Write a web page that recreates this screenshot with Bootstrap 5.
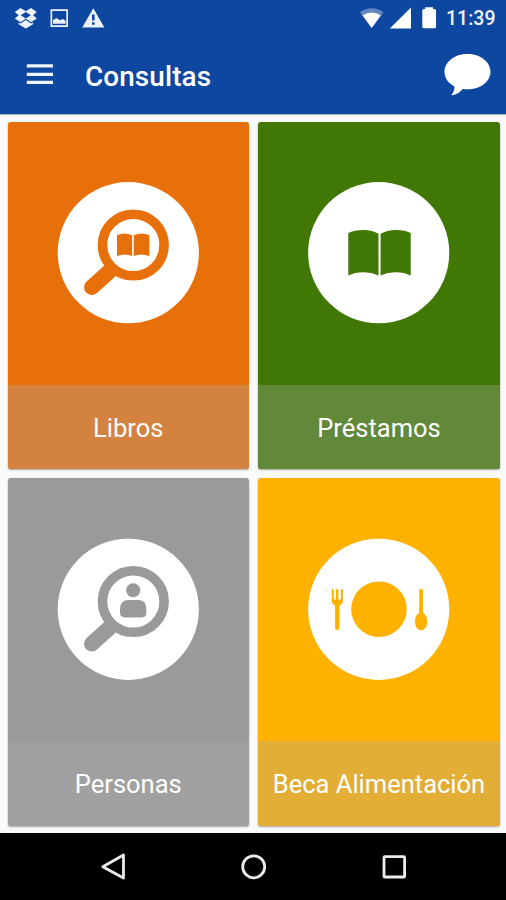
<!DOCTYPE html>
<html lang="es">
<head>
<meta charset="utf-8">
<meta name="viewport" content="width=device-width, initial-scale=1">
<title>Consultas</title>
<link href="https://cdn.jsdelivr.net/npm/bootstrap@5.3.0/dist/css/bootstrap.min.css" rel="stylesheet">
<style>
  body { font-family: Roboto, "Liberation Sans", sans-serif; background: #fafafa; height: 900px; overflow: hidden; }
  svg { display: block; flex: none; }
  .app-head { background: #0e479f; height: 114px; color: #fff; box-shadow: 0 1px 1px rgba(0,0,0,.3); }
  .status-row { height: 38px; padding: 0 11px 0 14px; }
  .clock { font-size: 19.5px; font-weight: 500; line-height: 38px; width: 49px; margin-left: 9px; white-space: nowrap; color: #eef3fb; }
  .tool-row { height: 76px; padding: 0 14px 0 26px; }
  .title { font-size: 27.9px; font-weight: 500; line-height: 76px; margin-left: 31px; padding-top: 2px; letter-spacing: .1px; }
  .tiles { display: grid; grid-template-columns: 242px 242px; grid-template-rows: 347px 348px; gap: 9px; padding: 8px 6px 7px 7px; height: 719px; }
  .tile { background: var(--tone); color: #fff; border-radius: 3px; overflow: hidden; box-shadow: 0 1px 2px rgba(0,0,0,.35); text-decoration: none; }
  .tile:nth-child(odd) { margin-left: .5px; }
  .tile-art { height: 263px; padding-top: 60px; fill: var(--tone); stroke: none; }
  .tile-label { background: var(--band); font-size: 25.5px; line-height: 87px; white-space: nowrap; }
  .orange { --tone: #e7700b; --band: #d3823f; }
  .green { --tone: #417704; --band: #628839; }
  .gray { --tone: #9a9a9a; --band: #a0a0a0; }
  .amber { --tone: #ffb100; --band: #e2ae35; }
  .sys-nav { background: #000; height: 67px; }
</style>
</head>
<body class="d-flex flex-column">
<header class="app-head position-relative">
  <div class="status-row d-flex align-items-center">
    <svg width="92" height="38" viewBox="14 0 92 38" fill="#eef3fb">
      <path fill-rule="evenodd" d="M20.5 8 25.8 11.3 31.1 8 36.8 11.9 33 15.2 36.8 18.6 31.1 22.2 25.8 18.8 20.5 22.2 14.8 18.6 18.6 15.2 14.8 11.9zM25.8 11.9 20.7 15.2 25.8 18.4 30.9 15.2zM18.6 22.4 20.6 23.5 25.8 20 31 23.5 33 22.4V24.3L25.8 28.6 18.6 24.3z"/>
      <path fill-rule="evenodd" d="M50.5 9.2H68V26.9H50.5zM52.2 10.9V25.2H66.3V10.9zM53 23.7V20.3L56.5 18 60 20.3 63 19 65.6 21V23.7z"/>
      <path fill-rule="evenodd" d="M93.3 8.2 104.4 27.4H82.2zM92 14.5V20.4H94.6V14.5zM92 22.3V24.8H94.6V22.3z"/>
    </svg>
    <svg class="ms-auto" width="78" height="38" viewBox="359 0 78 38" fill="#fff">
      <path opacity=".35" d="M359.8 12.2Q371.7 4.5 383.5 12.2L371.7 28z"/>
      <path d="M362.5 15.2Q371.7 10 380.9 15.2L371.7 28z"/>
      <path d="M411 7.5V28.4H389.8z"/>
      <path d="M425.2 7.3H433V9H434.5Q436 9 436 10.5V26.8Q436 28.3 434.5 28.3H423.8Q422.3 28.3 422.3 26.8V10.5Q422.3 9 423.8 9H425.2z"/>
    </svg>
    <span class="clock">11:39</span>
  </div>
  <div class="tool-row d-flex align-items-center">
    <svg width="28" height="76" viewBox="26 38 28 76" fill="#eef3fb"><path d="M26.8 64.3H53V67.6H26.8zM26.8 72.8H53V76.1H26.8zM26.8 80.8H53V84.1H26.8z"/></svg>
    <span class="title">Consultas</span>
    <svg class="ms-auto" width="48" height="76" viewBox="444 38 48 76" fill="#fff"><path d="M467.5 54C480.3 54 490.5 61.8 490.5 71.7S480.3 89.3 467.5 89.3Q465 89.3 462.6 88.9C460 92.3 456.5 94.7 452.2 95.2C451.6 95.2 451.5 94.7 452 94.2C453.9 91.8 454.7 89.5 454.2 86.3C448.2 83.2 444.5 77.8 444.5 71.7C444.5 61.8 454.7 54 467.5 54z"/></svg>
  </div>
</header>

<main class="tiles">
  <a class="tile orange" href="#">
    <div class="tile-art d-flex justify-content-center align-items-start">
      <svg width="142" height="142" viewBox="7.2 7 142 142">
        <circle cx="78.5" cy="77.7" r="70.6" fill="#fff"/>
        <circle cx="83.5" cy="70" r="30.8" fill="none" stroke="var(--tone)" stroke-width="9.6"/>
        <path d="M60 96 42 112.3" fill="none" stroke="var(--tone)" stroke-width="15.5" stroke-linecap="round"/>
        <path d="M67.2 60.3Q74.5 56.8 82.3 60.2V81Q74.5 77.8 67.2 81.2zM83.9 60.2Q92 56.8 99.6 60.3V81.2Q92 77.8 83.9 81z"/>
      </svg>
    </div>
    <div class="tile-label text-center">Libros</div>
  </a>
  <a class="tile green" href="#">
    <div class="tile-art d-flex justify-content-center align-items-start">
      <svg width="142" height="142" viewBox="8 7 142 142">
        <circle cx="78.7" cy="77.7" r="70.6" fill="#fff"/>
        <path d="M48.3 58Q54 55 63.5 55Q72.5 55.2 78.5 58.8V100.5Q71 97 63.5 97.2Q54.5 97.3 48.3 100.5zM80.6 58.8Q87 55.2 96 55Q105 55 110.7 58V100.5Q104.5 97.3 96 97.2Q88 97 80.6 100.5z"/>
      </svg>
    </div>
    <div class="tile-label text-center">Préstamos</div>
  </a>
  <a class="tile gray" href="#">
    <div class="tile-art d-flex justify-content-center align-items-start">
      <svg width="142" height="142" viewBox="7.2 8 142 142">
        <circle cx="78.5" cy="79.3" r="70.6" fill="#fff"/>
        <circle cx="83.5" cy="71.5" r="30.8" fill="none" stroke="var(--tone)" stroke-width="9.6"/>
        <path d="M60 97.5 42 113.8" fill="none" stroke="var(--tone)" stroke-width="15.5" stroke-linecap="round"/>
        <circle cx="83.4" cy="60.3" r="7"/>
        <path d="M78 70H89Q96.6 70.5 96.6 79V82.5Q96.6 87.3 91.5 87.5H75.5Q70.2 87.3 70.2 82.5V79Q70.2 70.5 78 70z"/>
      </svg>
    </div>
    <div class="tile-label text-center">Personas</div>
  </a>
  <a class="tile amber" href="#">
    <div class="tile-art d-flex justify-content-center align-items-start">
      <svg width="142" height="142" viewBox="8 8 142 142">
        <circle cx="78.7" cy="79.3" r="70.6" fill="#fff"/>
        <circle cx="79" cy="79.2" r="27.8"/>
        <path d="M31.7 60Q31.7 59 32.7 59T33.7 60V69.5H36V60Q36 59 37.2 59T38.4 60V69.5H40.9V60Q40.9 59 41.9 59T42.9 60V70.5Q42.9 74 39.5 75.6V98Q39.5 99.9 37.3 99.9T35.1 98V75.6Q31.7 74 31.7 70.5z"/>
        <path d="M119.2 60.4Q119.2 59 121.1 59T123 60.4V83C125.8 84.2 127.2 87 127.2 91C127.2 97 124.8 100.2 121.1 100.2S115 97 115 91C115 87 116.4 84.2 119.2 83z"/>
      </svg>
    </div>
    <div class="tile-label text-center">Beca Alimentación</div>
  </a>
</main>

<nav class="sys-nav d-flex justify-content-center">
  <svg width="506" height="67" viewBox="0 833 506 67" fill="none" stroke="#ececec" stroke-width="2.8" stroke-linejoin="round">
    <path d="M123.5 855V878L102.8 866.7z"/>
    <circle cx="253.7" cy="866.8" r="11"/>
    <rect x="384" y="856.6" width="20.6" height="20.4" rx=".8"/>
  </svg>
</nav>
<script src="https://cdn.jsdelivr.net/npm/bootstrap@5.3.0/dist/js/bootstrap.bundle.min.js"></script>
</body>
</html>
